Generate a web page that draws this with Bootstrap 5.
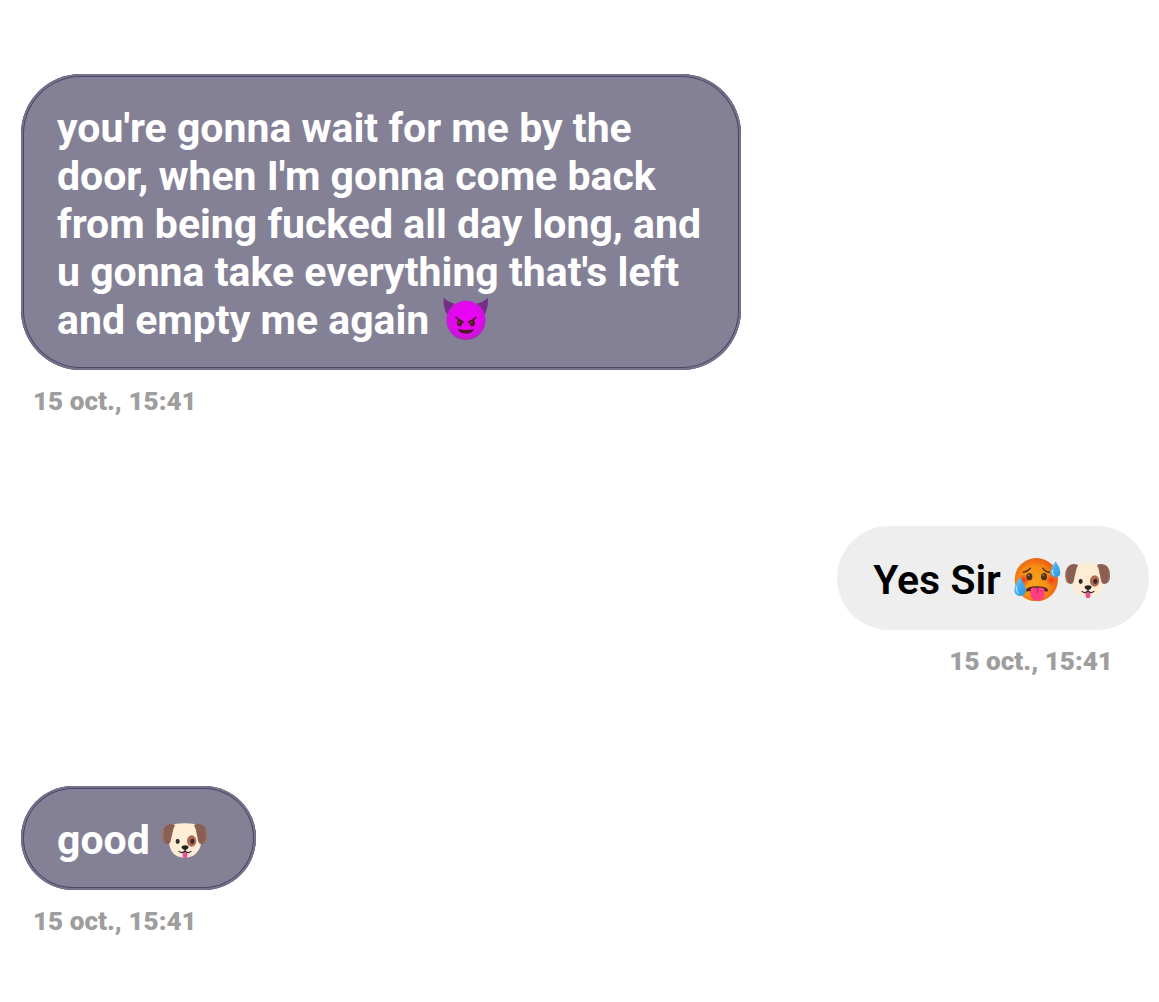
<!DOCTYPE html>
<html lang="en">
<head>
    <meta charset="UTF-8">
    <title>Messages</title>
    <meta name="viewport" content="width=device-width, initial-scale=1">
    <!-- Bootstrap 5 CDN -->
    <link href="https://cdn.jsdelivr.net/npm/bootstrap@5.3.3/dist/css/bootstrap.min.css" rel="stylesheet">
    <style>
        body {
            background: #fff;
            font-family: Roboto, "Liberation Sans", sans-serif;
            overflow: hidden;
        }
        .chat {
            padding: 74px 10px 0 21px;
        }
        .message {
            height: 260px;
        }
        .message-long {
            height: 452px;
        }
        .message-long .bubble {
            width: 720px;
        }
        .bubble {
            padding: 30px 36px 26px;
            border-radius: 60px;
            font-size: 41px;
            font-weight: 600;
            line-height: 48px;
            white-space: nowrap;
        }
        .bubble-in {
            padding-right: 48px;
            background: #848196;
            color: #fff;
            font-weight: 700;
            font-size: 40.97px;
            box-shadow: inset 0 0 0 2px #77738c, inset 0 0 0 3px #4c4765;
        }
        .bubble-out {
            background: #eee;
            color: #000;
        }
        .stamp {
            margin: 16px 36px 0 12px;
            font-size: 26.1px;
            font-weight: 900;
            line-height: 30px;
            color: #9e9e9e;
        }
        .emoji {
            display: inline-block;
            overflow: visible;
            vertical-align: baseline;
        }
        .emoji-devil { width: 45.3px; height: 43.3px; margin: -20px 0 -6.5px 3.5px; }
        .emoji-hot { width: 46.7px; height: 43.3px; margin: -20px 0 -7px 2.5px; }
        .emoji-dog { width: 45.3px; height: 36px; margin: -20px 0 -5px 2px; }
        .bubble-in .emoji-dog { margin-right: 1px; }
        .bubble-out .emoji-dog { margin-left: 4.5px; margin-right: 3px; }
    </style>
</head>
<body>
    <!-- Shared emoji shapes -->
    <svg width="0" height="0" class="position-absolute" aria-hidden="true">
        <defs>
            <radialGradient id="devilSkin" cx=".5" cy=".45" r=".55">
                <stop offset=".55" stop-color="#e705f2"/>
                <stop offset=".85" stop-color="#d411e0"/>
                <stop offset="1" stop-color="#a62bb5"/>
            </radialGradient>
            <radialGradient id="hotSkin" cx=".45" cy=".55" r=".58">
                <stop offset="0" stop-color="#f9a21c"/>
                <stop offset=".6" stop-color="#f68e17"/>
                <stop offset="1" stop-color="#e8590c"/>
            </radialGradient>
            <radialGradient id="blush">
                <stop offset="0" stop-color="#f4361c"/>
                <stop offset="1" stop-color="#f4361c" stop-opacity="0"/>
            </radialGradient>
            <linearGradient id="sweat" x1="0" y1="0" x2="1" y2="1">
                <stop offset="0" stop-color="#7bd0fa"/>
                <stop offset=".5" stop-color="#41a9ee"/>
                <stop offset="1" stop-color="#2696e4"/>
            </linearGradient>
            <symbol id="devil" viewBox="38 38 136 130">
                <path d="M40 40Q50 52 74 58L50 91Q38 70 40 40Z" fill="#742f85"/>
                <path d="M172 40Q163 52 139 58L163 91Q175 70 172 40Z" fill="#742f85"/>
                <circle cx="107" cy="108" r="59" fill="url(#devilSkin)"/>
                <ellipse cx="88" cy="116" rx="8" ry="10" fill="#4d1a24"/>
                <ellipse cx="126" cy="116" rx="8" ry="10" fill="#4d1a24"/>
                <path d="M77 99Q85 109 99 113M137 99Q129 109 115 113" fill="none" stroke="#4d1a24" stroke-width="5" stroke-linecap="round"/>
                <circle cx="86" cy="114" r="2.5" fill="#9b4557"/>
                <circle cx="124" cy="114" r="2.5" fill="#9b4557"/>
                <path d="M83 134Q107 140 131 134Q127 148 107 148Q87 148 83 134Z" fill="#4d1a24"/>
            </symbol>
            <symbol id="hot" viewBox="26 24 140 130">
                <circle cx="93" cy="89" r="65" fill="url(#hotSkin)"/>
                <circle cx="55" cy="90" r="19" fill="url(#blush)"/>
                <circle cx="137" cy="91" r="17" fill="url(#blush)"/>
                <ellipse cx="72" cy="80" rx="9" ry="11" fill="#513222"/>
                <ellipse cx="116" cy="80" rx="9" ry="11" fill="#513222"/>
                <circle cx="70" cy="76" r="3" fill="#94745e"/>
                <circle cx="114" cy="76" r="3" fill="#94745e"/>
                <path d="M54 67Q67 65 75 55M113 55Q120 66 132 67" fill="none" stroke="#593526" stroke-width="4.5" stroke-linecap="round"/>
                <path d="M62 120Q66 109 95 109Q124 109 128 120Q129 127 122 124L68 124Q61 127 62 120Z" fill="#4a2924"/>
                <path d="M76 116Q84 111 95 114Q107 111 117 116L118 132Q117 152 96 152Q76 152 75 132Z" fill="#fb3f81"/>
                <path d="M96 111V129" stroke="#b92156" stroke-width="3"/>
                <path d="M44 82Q27 105 27 121Q28 137 44 138Q61 137 61 121Q60 106 44 82Z" fill="url(#sweat)"/>
                <path d="M151 34Q136 54 136 67Q137 82 151 82Q166 80 165 66Q163 51 151 34Z" fill="url(#sweat)"/>
                <path d="M34 111Q32 122 38 129M143 61Q139 69 145 75" fill="none" stroke="#a6e1fc" stroke-width="4" stroke-linecap="round"/>
            </symbol>
            <symbol id="dog" viewBox="180 38 136 108">
                <path d="M206 48Q211 39 248 39Q285 39 291 49Q300 72 298 96Q294 125 272 137Q248 147 224 137Q204 125 201 97Q198 72 206 48Z" fill="#feedd4"/>
                <path d="M219 44Q208 39 197 43C186 47 180 62 181 80Q182 99 196 101C209 101 206 85 211 70Q213 56 219 44Z" fill="#8b5e54"/>
                <path d="M276 44Q287 38 299 43C311 48 316 62 315 80Q314 99 299 101C286 101 289 85 284 70Q282 55 276 44Z" fill="#8b5e54"/>
                <path d="M184 58Q180 78 187 95M311 58Q317 78 309 95" fill="none" stroke="#ae765f" stroke-width="3"/>
                <ellipse cx="269" cy="92" rx="14" ry="17" fill="#ad6a50"/>
                <ellipse cx="227" cy="93" rx="6" ry="8" fill="#332a29"/>
                <ellipse cx="271" cy="93" rx="6" ry="8" fill="#332a29"/>
                <path d="M242 126V137Q243 144 249 144Q256 144 256 137V126Z" fill="#ef4b94"/>
                <path d="M238 110Q240 105 249 105Q259 105 260 110Q259 117 249 120Q240 117 238 110Z" fill="#272120"/>
                <path d="M231 123Q240 131 249 122Q258 131 267 123M249 118V124" fill="none" stroke="#332725" stroke-width="3.5" stroke-linecap="round"/>
            </symbol>
        </defs>
    </svg>

    <main class="chat d-flex flex-column">
        <div class="message message-long d-flex flex-column align-items-start">
            <div class="bubble bubble-in">
                you're gonna wait for me by the<br>
                door, when I'm gonna come back<br>
                from being fucked all day long, and<br>
                u gonna take everything that's left<br>
                and empty me again <svg class="emoji emoji-devil" role="img" aria-label="smiling devil"><use href="#devil"/></svg>
            </div>
            <div class="stamp">15 oct., 15:41</div>
        </div>
        <div class="message d-flex flex-column align-items-end">
            <div class="bubble bubble-out">
                Yes Sir <svg class="emoji emoji-hot" role="img" aria-label="hot face"><use href="#hot"/></svg><svg class="emoji emoji-dog" role="img" aria-label="dog"><use href="#dog"/></svg>
            </div>
            <div class="stamp">15 oct., 15:41</div>
        </div>
        <div class="message d-flex flex-column align-items-start">
            <div class="bubble bubble-in">
                good <svg class="emoji emoji-dog" role="img" aria-label="dog"><use href="#dog"/></svg>
            </div>
            <div class="stamp">15 oct., 15:41</div>
        </div>
    </main>
    <script src="https://cdn.jsdelivr.net/npm/bootstrap@5.3.3/dist/js/bootstrap.bundle.min.js"></script>
</body>
</html>
